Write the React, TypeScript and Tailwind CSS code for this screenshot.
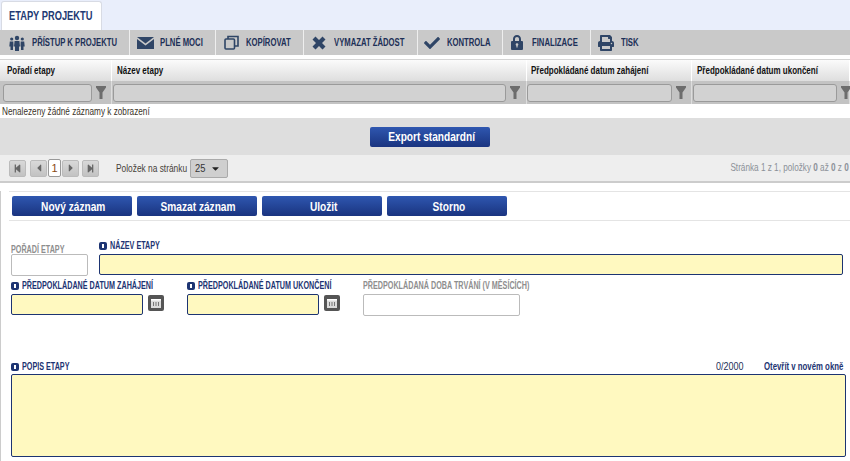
import React from "react";
import { FaCheck, FaPrint, FaStepBackward, FaStepForward, FaCaretLeft, FaCaretRight, FaCaretDown } from "react-icons/fa";

const sans = "font-['Liberation_Sans',Arial,sans-serif]";
const n80 = "inline-block whitespace-nowrap origin-left scale-x-[0.8]";
const n72 = "inline-block whitespace-nowrap origin-left scale-x-[0.72]";
const n71 = "inline-block whitespace-nowrap origin-left scale-x-[0.7]";

const People = () => (
  <svg width="16" height="16" viewBox="0 0 16 16" fill="#2f4566">
    <circle cx="8" cy="3" r="2.200" />
    <path d="M5.600 6h4.800l.6 5.500h-1V16H6v-4.500H5z" />
    <circle cx="2.700" cy="4" r="1.600" />
    <path d="M.8 6.500h3.500l.2 5H4V15H1.500v-3.500H.3z" />
    <circle cx="13.300" cy="4" r="1.600" />
    <path d="M11.700 6.500h3.500l.5 5h-1.200V15H12v-3.500h-.5z" />
  </svg>
);
const Mail = () => (
  <svg width="17" height="12" viewBox="0 0 17 12" fill="#2f4566">
    <path d="M0 0h17L8.500 6.500z" />
    <path d="M0 2l8.500 6.500L17 2v10H0z" />
  </svg>
);
const Copy = () => (
  <svg width="15" height="15" viewBox="0 0 15 15" fill="none" stroke="#2f4566" strokeWidth="1.600">
    <rect x="1" y="4" width="9.500" height="10" rx="1" />
    <path d="M4 4V1.500h10v9.500h-3.500" />
  </svg>
);
const Cross = () => (
  <svg width="14" height="14" viewBox="0 0 14 14" fill="#2f4566">
    <path d="M3.500 0.500L7 4l3.500-3.500 3 3L10 7l3.500 3.500-3 3L7 10l-3.500 3.500-3-3L4 7 .5 3.500z" />
  </svg>
);
const Lock = () => (
  <svg width="12" height="15" viewBox="0 0 12 15">
    <path fill="#2f4566" d="M6 0C3.500 0 2 1.800 2 4v2H1a1 1 0 0 0-1 1v7a1 1 0 0 0 1 1h10a1 1 0 0 0 1-1V7a1 1 0 0 0-1-1h-1V4c0-2.200-1.500-4-4-4zM4 4c0-1.300.8-2 2-2s2 .7 2 2v2H4z" />
    <circle cx="6" cy="9.500" r="1.300" fill="#c9c9c9" />
    <rect x="5.400" y="9.500" width="1.200" height="3" fill="#c9c9c9" />
  </svg>
);

const toolbar: { w: string; icon: React.ReactNode; label: string; iw: string }[] = [
  { w: "w-[130px]", iw: "w-[32px] pl-[9px]", icon: <People />, label: "PŘÍSTUP K PROJEKTU" },
  { w: "w-[86px]", iw: "w-[30px] pl-[7px]", icon: <Mail />, label: "PLNÉ MOCI" },
  { w: "w-[88px]", iw: "w-[30px] pl-[8px]", icon: <Copy />, label: "KOPÍROVAT" },
  { w: "w-[114px]", iw: "w-[30px] pl-[8px]", icon: <Cross />, label: "VYMAZAT ŽÁDOST" },
  { w: "w-[85px]", iw: "w-[29px] pl-[6px]", icon: <FaCheck className="text-[#2f4566] text-[16px]" />, label: "KONTROLA" },
  { w: "w-[88px]", iw: "w-[29px] pl-[8px]", icon: <Lock />, label: "FINALIZACE" },
  { w: "w-[59px]", iw: "w-[30px] pl-[7px]", icon: <FaPrint className="text-[#2f4566] text-[16px]" />, label: "TISK" },
];

const Toolbar = () => (
  <div className="flex h-[25px] bg-[#c9c9c9]">
    {toolbar.map((t, i) => (
      <div key={i} className={`flex items-center h-full border-r border-[#eeeeee] ${t.w} ${i === 6 ? "border-r-0" : ""}`}>
        <span className={`flex items-center shrink-0 ${t.iw}`}>{t.icon}</span>
        <span className={`text-[11px] font-bold text-[#1d3057] ${n71}`}>{t.label}</span>
      </div>
    ))}
  </div>
);

const cols = [
  { w: "w-[112px]", hp: "pl-[7px]", fp: "pl-[3px]", label: "Pořadí etapy", input: "w-[89px]" },
  { w: "w-[415px]", hp: "pl-[5px]", fp: "pl-[1px]", label: "Název etapy", input: "w-[393px]" },
  { w: "w-[165px]", hp: "pl-[4px]", fp: "pl-[0px]", label: "Předpokládané datum zahájení", input: "w-[145px]" },
  { w: "w-[158px]", hp: "pl-[5px]", fp: "pl-[1px]", label: "Předpokládané datum ukončení", input: "w-[144px]" },
];

const Funnel = () => (
  <svg width="10" height="13" viewBox="0 0 10 13" fill="#6d6d6d" className="shrink-0">
    <path d="M0 0h10v1.500L6.500 6.500V13h-3V6.500L0 1.500z" />
  </svg>
);

const Table = () => (
  <div>
    <div className="flex h-[22px] border-t border-[#d4d4d4] bg-gradient-to-b from-[#fbfbfb] to-[#dedede]">
      {cols.map((c, i) => (
        <div key={i} className={`${c.w} ${c.hp} flex items-center border-r border-[#ffffff]`}>
          <span className={`text-[10px] font-bold text-[#111111] ${n80}`}>{c.label}</span>
        </div>
      ))}
    </div>
    <div className="flex h-[23px] bg-[#c3c3c3]">
      {cols.map((c, i) => (
        <div key={i} className={`${c.w} ${c.fp} flex items-center gap-[4px] border-r border-[#dddddd]`}>
          <div className={`${c.input} shrink-0 h-[18px] rounded-[3px] bg-[#d2d2d2] border border-[#9a9a9a]`} />
          <Funnel />
        </div>
      ))}
    </div>
    <div className="h-[14px] bg-white pl-[2px] text-[10px] leading-[16px] text-[#3b3328]">
      <span className="inline-block whitespace-nowrap origin-left scale-x-[0.82]">Nenalezeny žádné záznamy k zobrazení</span>
    </div>
  </div>
);

const BlueBtn = ({ children }: { children: React.ReactNode }) => (
  <button className="w-[120px] h-[20px] pl-[3px] rounded-[2px] bg-gradient-to-b from-[#2f57b0] to-[#1a3480] text-white text-[13px] font-bold leading-none">
    <span className="inline-block whitespace-nowrap origin-center scale-x-[0.78]">{children}</span>
  </button>
);

const PagerBtn = ({ children }: { children: React.ReactNode }) => (
  <div className="w-[17px] h-[17px] rounded-[2px] border border-[#bbbbbb] bg-gradient-to-b from-[#d9d9d9] to-[#c2c2c2] flex items-center justify-center text-[#666666] text-[9px]">
    {children}
  </div>
);

const Pager = () => (
  <div className="flex items-center h-[28px] bg-[#eeeeee] border-b-2 border-[#cccccc] pl-[9px] pr-px">
    <PagerBtn><FaStepBackward /></PagerBtn>
    <div className="w-[4px]" />
    <PagerBtn><FaCaretLeft className="text-[12px]" /></PagerBtn>
    <div className="w-[13px] h-[18px] mx-px bg-white border border-[#999999] rounded-[2px] text-[11px] leading-[16px] text-center text-[#8a4a14]">1</div>
    <PagerBtn><FaCaretRight className="text-[12px]" /></PagerBtn>
    <div className="w-[3px]" />
    <PagerBtn><FaStepForward /></PagerBtn>
    <span className="ml-[17px] w-[71px] text-[11px] text-[#46413a] inline-block whitespace-nowrap origin-left scale-x-[0.76]">Položek na stránku</span>
    <div className="ml-[3px] w-[38px] h-[19px] bg-[#cfcfcf] border border-[#aaaaaa] rounded-[2px] flex items-center justify-between pl-[4px] pr-[6px] text-[11px] text-[#333333]">
      <span className="inline-block origin-left scale-x-[0.85]">25</span>
      <FaCaretDown className="text-[11px] text-[#222222]" />
    </div>
    <span className="ml-auto text-[10.500px] text-[#8b9098] inline-block whitespace-nowrap origin-right scale-x-[0.78]">
      Stránka 1 z 1, položky <span className="font-bold">0</span> až <span className="font-bold">0</span> z <span className="font-bold">0</span>
    </span>
  </div>
);

const Req = () => (
  <span className="inline-flex items-center justify-center w-[8px] h-[8px] rounded-[2px] bg-[#1d3472] mr-[3px] shrink-0">
    <span className="w-[2px] h-[4px] bg-white" />
  </span>
);

const Label = ({ children, req }: { children: React.ReactNode; req?: boolean }) => (
  <div className={`flex items-center h-[9px] text-[10px] font-bold ${req ? "text-[#1d3472]" : "text-[#8e8e8e]"}`}>
    {req && <Req />}
    <span className={n72}>{children}</span>
  </div>
);

const reqInput = "h-[21px] bg-[#fff9c0] border border-[#1d3472] rounded-[2px]";
const optInput = "h-[22px] bg-white border border-[#bbbbbb] rounded-[2px]";

const Cal = () => (
  <div className="w-[16px] h-[16px] mt-px rounded-[2px] bg-[#555555] flex items-center justify-center">
    <svg width="10" height="9" viewBox="0 0 10 9">
      <rect width="10" height="9" fill="#dcdcdc" />
      <rect y="0" width="10" height="1.500" fill="#ffffff" />
      <path d="M2 3h1v4H2zM4.500 3h1v4h-1zM7 3h1v4H7z" fill="#777777" />
    </svg>
  </div>
);

export default function App() {
  return (
    <div className={`w-[850px] h-[461px] overflow-hidden bg-white ${sans}`}>
      <div className="h-[30px] bg-[#e9eefb] flex items-end pl-px">
        <div className="w-[101px] h-[29px] bg-white rounded-t-[3px] border border-b-0 border-[#d8dbe4] pl-[7px] flex items-center text-[12px] font-bold text-[#233a73]">
          <span className="inline-block whitespace-nowrap origin-left scale-x-[0.775]">ETAPY PROJEKTU</span>
        </div>
      </div>
      <Toolbar />
      <div className="h-[4px]" />
      <Table />
      <div className="h-[37px] bg-[#dedede] flex items-center justify-center pl-[10px]">
        <BlueBtn>Export standardní</BlueBtn>
      </div>
      <Pager />
      <div className="border-l border-[#cccccc] h-[278px] pl-[8px]">
        <div className="mt-[8px] h-[30px] border-y border-[#e4e4e4] flex items-center gap-[5px] pl-[3px]">
          <BlueBtn>Nový záznam</BlueBtn>
          <BlueBtn>Smazat záznam</BlueBtn>
          <BlueBtn>Uložit</BlueBtn>
          <BlueBtn>Storno</BlueBtn>
        </div>
        <div className="flex pl-[2px] mt-[20px] gap-[11px]">
          <div className="w-[77px] pt-[4px]">
            <Label>POŘADÍ ETAPY</Label>
            <div className={optInput} />
          </div>
          <div className="w-[744px]">
            <Label req>NÁZEV ETAPY</Label>
            <div className={`${reqInput} mt-[4px]`} />
          </div>
        </div>
        <div className="flex pl-[2px] mt-[5px]">
          <div className="w-[132px]">
            <Label req>PŘEDPOKLÁDANÉ DATUM ZAHÁJENÍ</Label>
            <div className={`${reqInput} mt-[4px]`} />
          </div>
          <div className="ml-[5px] mt-[13px]"><Cal /></div>
          <div className="w-[132px] ml-[23px]">
            <Label req>PŘEDPOKLÁDANÉ DATUM UKONČENÍ</Label>
            <div className={`${reqInput} mt-[4px]`} />
          </div>
          <div className="ml-[5px] mt-[13px]"><Cal /></div>
          <div className="w-[157px] ml-[23px]">
            <Label>PŘEDPOKLÁDANÁ DOBA TRVÁNÍ (V MĚSÍCÍCH)</Label>
            <div className={`${optInput} mt-[4px]`} />
          </div>
        </div>
        <div className="flex items-center pl-[2px] mt-[46px] h-[9px] w-[835px]">
          <Label req>POPIS ETAPY</Label>
          <span className="ml-auto w-[27px] text-[10px] text-[#1d3057] inline-block whitespace-nowrap origin-left scale-x-[0.9]">0/2000</span>
          <span className="ml-[21px] w-[80px] text-[10px] font-bold text-[#1d3472] inline-block whitespace-nowrap origin-left scale-x-[0.78]">Otevřít v novém okně</span>
        </div>
        <div className="ml-[2px] mt-[3px] w-[835px] h-[83px] bg-[#fff9c0] border border-[#1d3472] rounded-[2px]" />
      </div>
    </div>
  );
}
